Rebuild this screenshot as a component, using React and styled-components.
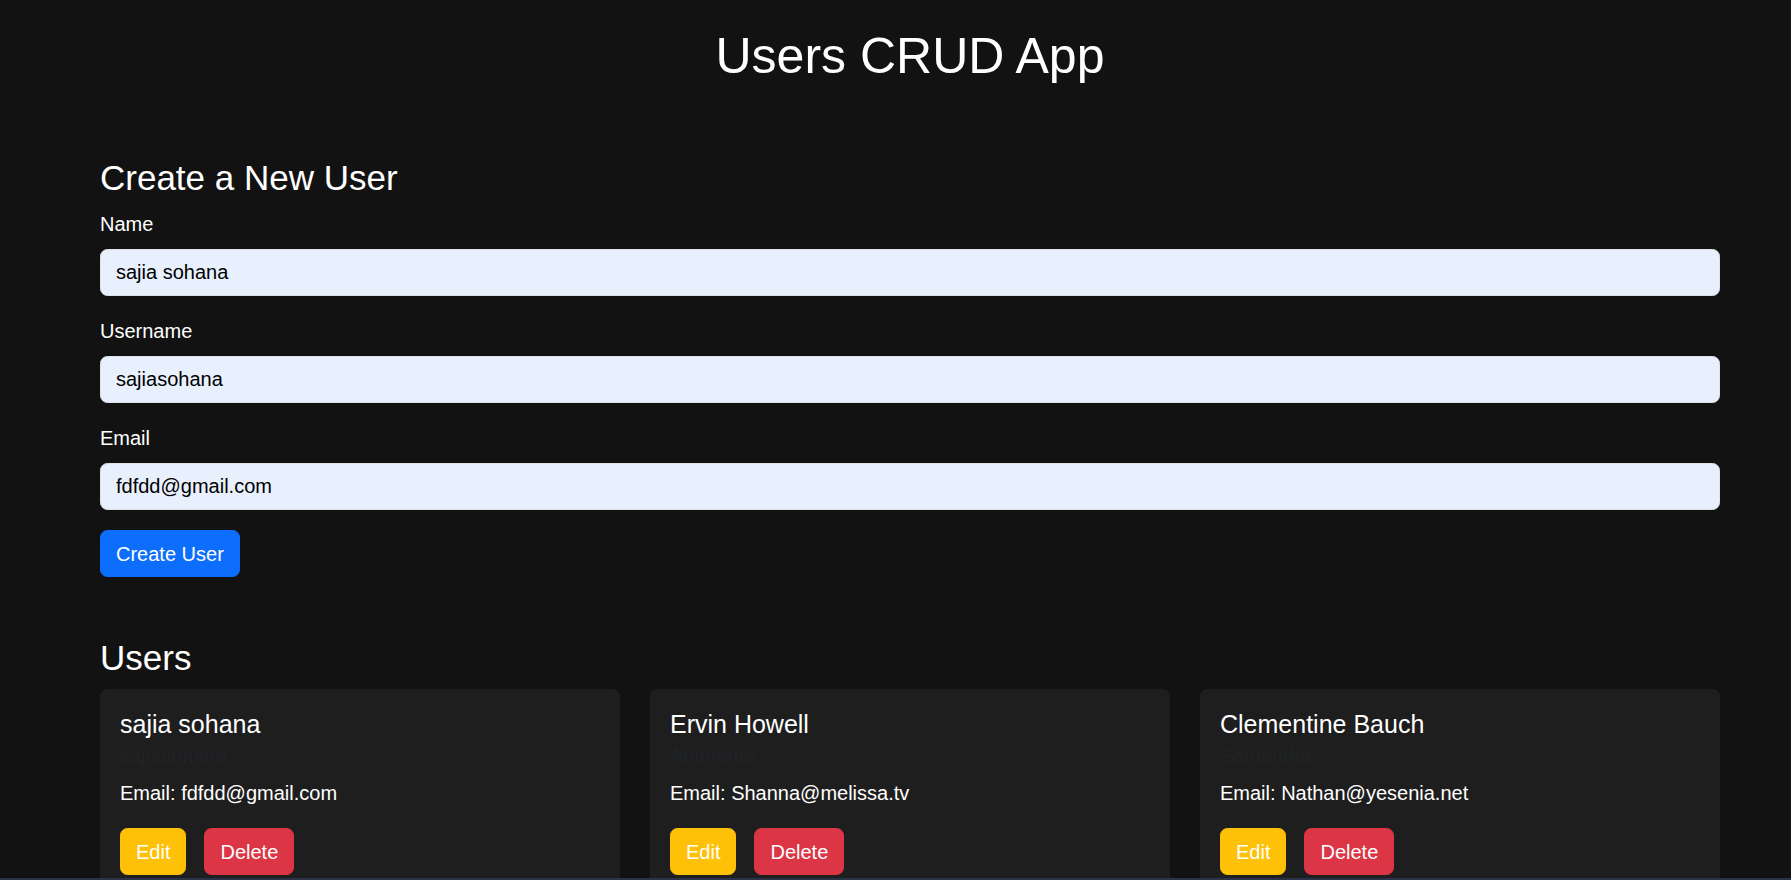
import React from "react";
import styled, { createGlobalStyle } from "styled-components";

const GlobalStyle = createGlobalStyle`
  html, body {
    margin: 0;
    padding: 0;
    background: #121212;
    color: #ffffff;
    font-family: "Liberation Sans", Arial, sans-serif;
    font-size: 20px;
    line-height: 1.5;
    overflow: hidden;
  }
  * { box-sizing: border-box; }
`;

const Page = styled.main`
  margin-left: 100px;
  width: 1620px;
  padding-top: 26px;
`;

const Title = styled.h1`
  margin: 0 0 71px;
  font-size: 50px;
  font-weight: 400;
  line-height: 1.2;
  text-align: center;
`;

const SectionTitle = styled.h2`
  margin: 0 0 10px;
  font-size: 35px;
  font-weight: 400;
  line-height: 1.2;
`;

const Form = styled.form`
  margin: 0 0 60px;
`;

const Field = styled.div`
  margin-bottom: 20px;
`;

const Label = styled.label`
  display: block;
  margin-bottom: 10px;
  font-size: 20px;
  line-height: 30px;
`;

const Input = styled.input`
  display: block;
  width: 100%;
  height: 47px;
  padding: 7.5px 15px;
  font-family: inherit;
  font-size: 20px;
  line-height: 30px;
  color: #000;
  background: #e8f0fe;
  border: 1px solid #dee2e6;
  border-radius: 7.5px;
  outline: none;
`;

const colors = {
  primary: "#0d6efd",
  warning: "#ffc107",
  danger: "#dc3545",
};

const Button = styled.button`
  display: inline-block;
  height: 47px;
  padding: 7.5px 15px;
  margin-right: ${(p) => p.$gap || 0}px;
  font-family: inherit;
  font-size: 20px;
  line-height: 30px;
  color: #fff;
  background: ${(p) => colors[p.$variant]};
  border: 1px solid ${(p) => colors[p.$variant]};
  border-radius: 7.5px;
  cursor: pointer;
`;

const CardGrid = styled.div`
  display: grid;
  grid-template-columns: repeat(3, 1fr);
  column-gap: 30px;
`;

const Card = styled.div`
  background: #1e1e1e;
  border-radius: 7.5px;
  padding: 20px;
  min-height: 200px;
`;

const CardTitle = styled.h5`
  margin: 0 0 10px;
  font-size: 25px;
  font-weight: 400;
  line-height: 30px;
`;

const CardSubtitle = styled.h6`
  margin: -5px 0 10px;
  font-size: 20px;
  font-weight: 400;
  line-height: 24px;
  color: rgb(32, 35, 38);
`;

const CardText = styled.p`
  margin: 0 0 20px;
  font-size: 20px;
  line-height: 30px;
`;

const Actions = styled.div`
  display: flex;
`;

const TaskbarEdge = styled.div`
  position: fixed;
  left: 0;
  right: 0;
  bottom: 0;
  height: 2px;
  background: #2a3348;
`;

const users = [
  { name: "sajia sohana", username: "sajiasohana", email: "fdfdd@gmail.com" },
  { name: "Ervin Howell", username: "Antonette", email: "Shanna@melissa.tv" },
  { name: "Clementine Bauch", username: "Samantha", email: "Nathan@yesenia.net" },
];

export default function App() {
  return (
    <>
      <GlobalStyle />
      <Page>
        <Title>Users CRUD App</Title>
        <SectionTitle>Create a New User</SectionTitle>
        <Form onSubmit={(e) => e.preventDefault()}>
          <Field>
            <Label>Name</Label>
            <Input defaultValue="sajia sohana" />
          </Field>
          <Field>
            <Label>Username</Label>
            <Input defaultValue="sajiasohana" />
          </Field>
          <Field>
            <Label>Email</Label>
            <Input defaultValue="fdfdd@gmail.com" />
          </Field>
          <Button $variant="primary" type="submit">Create User</Button>
        </Form>
        <SectionTitle>Users</SectionTitle>
        <CardGrid>
          {users.map((u) => (
            <Card key={u.username}>
              <CardTitle>{u.name}</CardTitle>
              <CardSubtitle>{u.username}</CardSubtitle>
              <CardText>Email: {u.email}</CardText>
              <Actions>
                <Button $variant="warning" $gap={18}>Edit</Button>
                <Button $variant="danger">Delete</Button>
              </Actions>
            </Card>
          ))}
        </CardGrid>
      </Page>
      <TaskbarEdge />
    </>
  );
}
